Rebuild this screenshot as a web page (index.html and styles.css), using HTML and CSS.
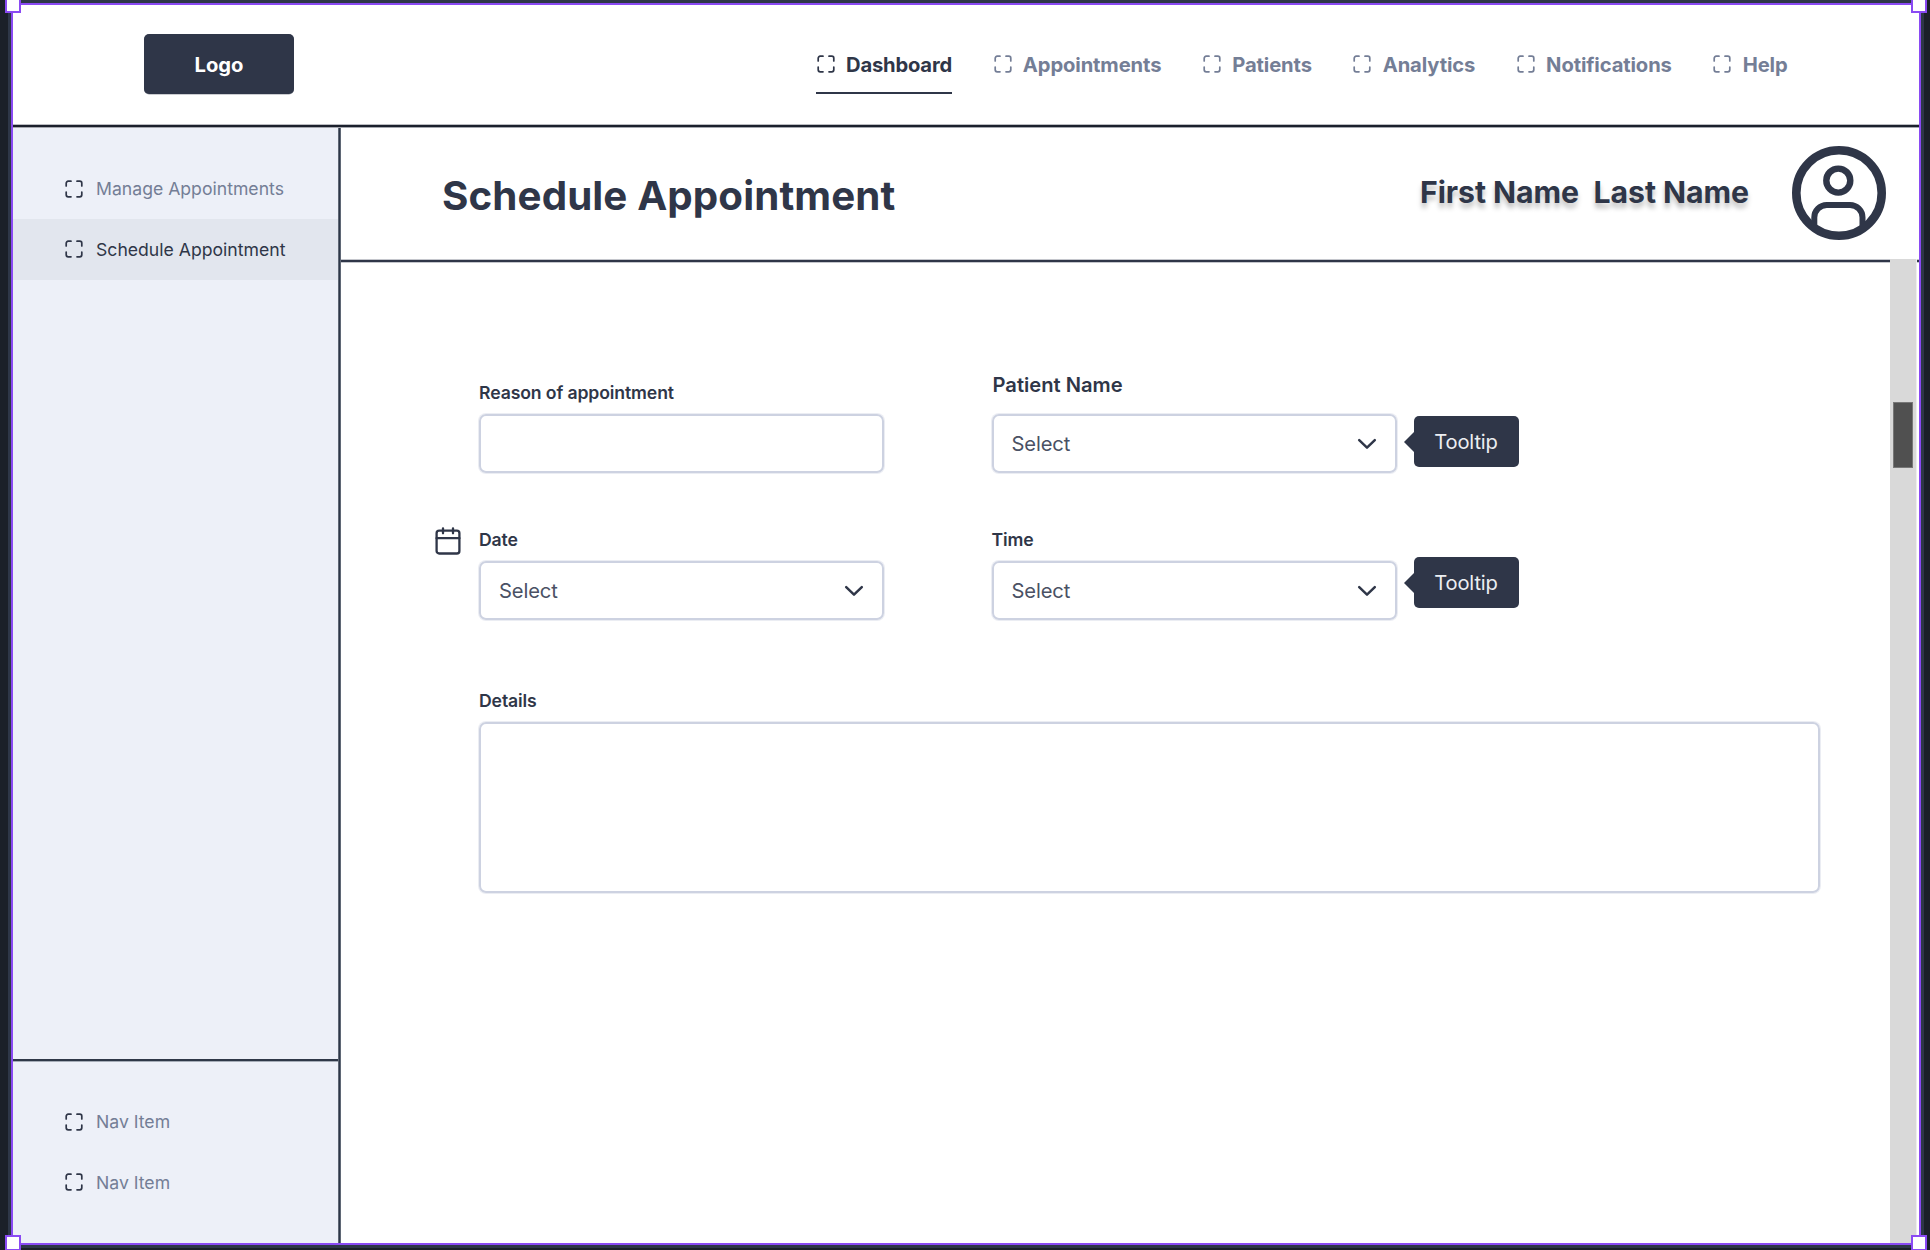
FILE: index.html
```html
<!DOCTYPE html>
<html lang="en">
<head>
<meta charset="utf-8">
<title>Schedule Appointment</title>
<link rel="stylesheet" href="styles.css">
</head>
<body>
<svg class="defs" width="0" height="0">
  <symbol id="scan" viewBox="0 0 20 20"><path d="M2.2 7V4.2a2 2 0 0 1 2-2H7M13 2.2h2.800a2 2 0 0 1 2 2V7M17.800 13v2.800a2 2 0 0 1-2 2H13M7 17.800H4.200a2 2 0 0 1-2-2V13" fill="none" stroke="currentColor" stroke-width="1.700" stroke-linecap="round"/></symbol>
  <symbol id="chevron" viewBox="0 0 20 12"><path d="M2.200 2.200L10 9.600L17.800 2.200" fill="none" stroke="currentColor" stroke-width="2.500" stroke-linecap="round" stroke-linejoin="round"/></symbol>
</svg>
<div class="frame">
  <i class="handle handle-tl"></i><i class="handle handle-tr"></i><i class="handle handle-bl"></i><i class="handle handle-br"></i>
  <header class="topbar">
    <div class="logo">Logo</div>
    <nav class="menu">
      <a class="menu-item active"><svg class="icon"><use href="#scan"/></svg><span>Dashboard</span></a>
      <a class="menu-item"><svg class="icon"><use href="#scan"/></svg><span>Appointments</span></a>
      <a class="menu-item"><svg class="icon"><use href="#scan"/></svg><span>Patients</span></a>
      <a class="menu-item"><svg class="icon"><use href="#scan"/></svg><span>Analytics</span></a>
      <a class="menu-item"><svg class="icon"><use href="#scan"/></svg><span>Notifications</span></a>
      <a class="menu-item"><svg class="icon"><use href="#scan"/></svg><span>Help</span></a>
    </nav>
  </header>
  <div class="body">
    <aside class="sidebar">
      <nav class="side-main">
        <a class="side-item"><svg class="icon"><use href="#scan"/></svg><span>Manage Appointments</span></a>
        <a class="side-item active"><svg class="icon"><use href="#scan"/></svg><span>Schedule Appointment</span></a>
      </nav>
      <nav class="side-foot">
        <a class="side-item"><svg class="icon"><use href="#scan"/></svg><span>Nav Item</span></a>
        <a class="side-item"><svg class="icon"><use href="#scan"/></svg><span>Nav Item</span></a>
      </nav>
    </aside>
    <main class="main">
      <div class="titlebar">
        <h1 class="title">Schedule Appointment</h1>
        <div class="user"><span>First Name</span><span>Last Name</span></div>
        <svg class="avatar" viewBox="0 0 94 94" fill="none" stroke="currentColor">
          <circle cx="47" cy="47" r="42.700" stroke-width="8.600"/>
          <circle cx="46.300" cy="34.600" r="12" stroke-width="6.400"/>
          <path d="M22.300 80V71.500a12.500 12.500 0 0 1 12.500-12.500H58a12.500 12.500 0 0 1 12.500 12.500V80" stroke-width="6"/>
        </svg>
      </div>
      <div class="content">
        <form class="form">
          <div class="field">
            <label class="label">Reason of appointment</label>
            <div class="control"></div>
          </div>
          <div class="field">
            <label class="label label-large">Patient Name</label>
            <div class="control"><span>Select</span><svg class="chevron"><use href="#chevron"/></svg><div class="tooltip">Tooltip</div></div>
          </div>
          <div class="field">
            <label class="label">
              <svg class="calendar" viewBox="0 0 26 28" fill="none" stroke="currentColor" stroke-width="2.300" stroke-linecap="round"><rect x="1.600" y="3.700" width="22.800" height="22.800" rx="2.600"/><path d="M1.600 11.200h22.800M8 1.300v5M18 1.300v5"/></svg>Date</label>
            <div class="control"><span>Select</span><svg class="chevron"><use href="#chevron"/></svg></div>
          </div>
          <div class="field">
            <label class="label">Time</label>
            <div class="control"><span>Select</span><svg class="chevron"><use href="#chevron"/></svg><div class="tooltip tooltip-raised">Tooltip</div></div>
          </div>
          <div class="field wide">
            <label class="label">Details</label>
            <div class="control area"></div>
          </div>
        </form>
        <div class="scrollbar"><div class="thumb"></div></div>
      </div>
    </main>
  </div>
</div>
</body>
</html>
```
FILE: styles.css
```css
* { box-sizing: border-box; }
body {
  margin: 0;
  height: 1250px;
  padding: 3px 9px 5px 11px;
  overflow: hidden;
  background: #1b2029;
  font-family: Inter, "Liberation Sans", sans-serif;
  color: #2f3648;
}
.defs { position: absolute; }
.icon { width: 20px; height: 20px; flex: none; }

.frame {
  position: relative;
  display: flex;
  flex-direction: column;
  width: 1910px;
  height: 1242px;
  border: 2px solid #8a4af3;
  box-shadow: 0 0 0 3px #2e3748;
  background: #fff;
}
.handle {
  position: absolute;
  z-index: 2;
  width: 16px;
  height: 16px;
  border: 2px solid #8a4af3;
  background: #fff;
}
.handle-tl { left: -8px; top: -8px; }
.handle-tr { right: -8px; top: -8px; }
.handle-bl { left: -8px; bottom: -8px; }
.handle-br { right: -8px; bottom: -8px; }

.topbar {
  display: flex;
  justify-content: space-between;
  align-items: flex-start;
  height: 122px;
  padding: 29px 131.500px 0 131px;
  border-bottom: 2px solid #1b202c;
  box-shadow: inset 0 -1px #bbbcc1, 0 1px #a5a7ae;
}
.logo {
  display: grid;
  place-items: center;
  width: 150px;
  height: 60px;
  border-radius: 5px;
  background: #2f3648;
  box-shadow: 0 0.500px 0.500px #2f364880;
  color: #fff;
  font-size: 20.200px;
  font-weight: 700;
}
.menu { display: flex; gap: 40.600px; }
.menu-item {
  display: flex;
  align-items: center;
  gap: 10.300px;
  height: 60px;
  border-bottom: 2px solid transparent;
  border-top: 2px solid transparent;
  color: #747e96;
  font-size: 20.200px;
  font-weight: 700;
  letter-spacing: -0.120px;
}
.menu-item.active {
  border-bottom-color: #2f3648;
  color: #2f3648;
  letter-spacing: -0.190px;
}

.body { display: flex; flex: 1; margin-top: 1px; }
.sidebar {
  display: flex;
  flex-direction: column;
  justify-content: space-between;
  width: 327px;
  padding-right: 1px;
  border-right: 1px solid #2d3748;
  box-shadow: inset -1px 0 #5f6775, 1px 0 #5f6775;
  background: #edf0f8;
}
.side-main { padding-top: 30.500px; }
.side-foot {
  height: 184px;
  padding-top: 30.500px;
  border-top: 2px solid #2f3848;
  box-shadow: inset 0 1px #a6adb8;
}
.side-item {
  display: flex;
  align-items: center;
  gap: 12.500px;
  height: 60.500px;
  padding-left: 50.500px;
  font-size: 17.640px;
  color: #2f3648;
}
.side-item span { color: #747e96; }
.side-item.active { background: #e2e6ee; }
.side-item.active span { color: #2f3648; }

.main { display: flex; flex: 1; flex-direction: column; padding-left: 1px; }
.titlebar {
  display: flex;
  align-items: flex-start;
  height: 134px;
  padding: 18px 33px 0 101px;
  border-bottom: 2px solid #2f3648;
  box-shadow: inset 0 -1px #c4c6cc, 0 1px #c4c6cc;
}
.title {
  flex: 1;
  margin: 25px 0 0;
  font-size: 40.300px;
  line-height: 50px;
  font-weight: 700;
  letter-spacing: 0.110px;
}
.user {
  display: flex;
  gap: 14.500px;
  margin: 26px 43px 0 0;
  font-size: 30.240px;
  line-height: 41px;
  font-weight: 700;
  letter-spacing: -0.060px;
  text-shadow: 0 5px 5px rgba(0, 0, 0, 0.25);
}
.avatar { width: 94px; height: 94px; }

.content { display: flex; flex: 1; justify-content: space-between; }
.form {
  display: grid;
  grid-template-columns: 405px 405px 1fr;
  grid-template-rows: 60px 147px 161px 1fr;
  column-gap: 107.500px;
  width: 1341px;
  margin-left: 138px;
  padding-top: 50px;
}
.field { grid-row: 2; }
.field:nth-child(3), .field:nth-child(4) { grid-row: 3; }
.field.wide { grid-column: 1 / -1; grid-row: 4; }
.label {
  position: relative;
  display: block;
  height: 42px;
  padding-top: 9px;
  font-size: 17.640px;
  line-height: 24px;
  font-weight: 600;
  letter-spacing: -0.120px;
}
.label-large {
  padding: 1px 0 0 1px;
  font-size: 20.160px;
  letter-spacing: 0;
}
.calendar {
  position: absolute;
  left: -44px;
  top: 8px;
  width: 26px;
  height: 28px;
}
.control {
  position: relative;
  display: flex;
  align-items: center;
  justify-content: space-between;
  height: 59px;
  padding: 0 18px;
  border: 2px solid #cdd2e1;
  border-radius: 7px;
  box-shadow: 0 0 0 1px #cdd2e166;
  color: #4a5164;
  font-size: 20.160px;
  letter-spacing: -0.130px;
}
.area { height: 171px; }
.chevron { width: 20px; height: 12px; color: #2f3648; }
.tooltip {
  position: absolute;
  left: 420px;
  top: 0;
  width: 105px;
  height: 51px;
  border-radius: 5px;
  background: #2f3648;
  color: #eceef2;
  line-height: 51px;
  text-align: center;
}
.tooltip::before {
  content: "";
  position: absolute;
  left: -10px;
  top: 16px;
  border: solid transparent;
  border-width: 10px 10px 10px 0;
  border-right-color: #2f3648;
}
.tooltip-raised { top: -6px; }

.scrollbar {
  width: 29px;
  margin-top: -3px;
  padding: 143px 0 0 3px;
  background: linear-gradient(to right, #d9d9d9 26px, #eee 26px 27px, transparent 27px);
}
.thumb {
  width: 20px;
  height: 66px;
  border: 1px solid #777;
  background: #505050;
}
```
